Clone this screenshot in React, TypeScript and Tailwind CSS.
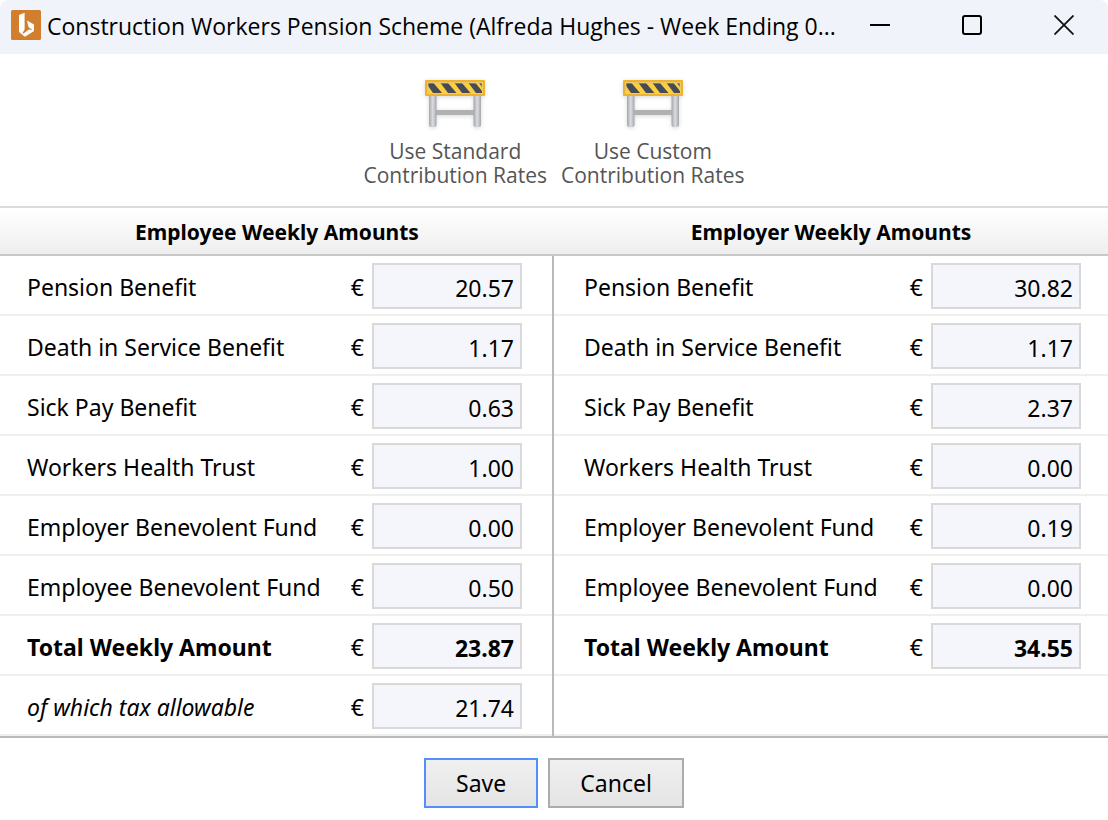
import React, { useState } from 'react';

type Row = {
  id: string;
  label: string;
  value: string;
  bold?: boolean;
  italic?: boolean;
};

const employeeRows: Row[] = [
  { id: 'ee-pension', label: 'Pension Benefit', value: '20.57' },
  { id: 'ee-death', label: 'Death in Service Benefit', value: '1.17' },
  { id: 'ee-sick', label: 'Sick Pay Benefit', value: '0.63' },
  { id: 'ee-health', label: 'Workers Health Trust', value: '1.00' },
  { id: 'ee-employer-fund', label: 'Employer Benevolent Fund', value: '0.00' },
  { id: 'ee-employee-fund', label: 'Employee Benevolent Fund', value: '0.50' },
  { id: 'ee-total', label: 'Total Weekly Amount', value: '23.87', bold: true },
  { id: 'ee-tax', label: 'of which tax allowable', value: '21.74', italic: true },
];

const employerRows: Row[] = [
  { id: 'er-pension', label: 'Pension Benefit', value: '30.82' },
  { id: 'er-death', label: 'Death in Service Benefit', value: '1.17' },
  { id: 'er-sick', label: 'Sick Pay Benefit', value: '2.37' },
  { id: 'er-health', label: 'Workers Health Trust', value: '0.00' },
  { id: 'er-employer-fund', label: 'Employer Benevolent Fund', value: '0.19' },
  { id: 'er-employee-fund', label: 'Employee Benevolent Fund', value: '0.00' },
  { id: 'er-total', label: 'Total Weekly Amount', value: '34.55', bold: true },
];

const AppLogo: React.FC = () => (
  <svg width="30" height="30" viewBox="0 0 30 30" className="shrink-0" aria-hidden="true">
    <rect width="30" height="30" rx="1.5" fill="#d17f2e" />
    <path d="M8 5L13.6 2.8V19.6L11.6 23L14 26.8L8 22Z" fill="#fff" />
    <path d="M16 10.5L23 14.5V21L17.6 17.2Z" fill="#fff" />
    <path d="M11.4 24.2L18 19.4L23 20.3V21L14 26.8Z" fill="#fff" />
  </svg>
);

const BarrierIcon: React.FC = () => (
  <svg width="64" height="56" viewBox="0 0 64 56" className="drop-shadow-sm" aria-hidden="true">
    <defs>
      <linearGradient id="leg" x1="0" x2="1" y1="0" y2="0">
        <stop offset="0" stopColor="#a4a6a8" />
        <stop offset="0.5" stopColor="#dcdde2" />
        <stop offset="1" stopColor="#a4a6a8" />
      </linearGradient>
      <clipPath id="board">
        <rect x="5" y="6" width="54" height="10" />
      </clipPath>
    </defs>
    <rect x="12" y="33" width="40" height="5" fill="#b0b1b2" />
    <rect x="6" y="17" width="7.5" height="33" rx="2" fill="url(#leg)" />
    <rect x="50.5" y="17" width="7.5" height="33" rx="2" fill="url(#leg)" />
    <rect x="2" y="3" width="60" height="16" rx="1" fill="#f0b12d" />
    <rect x="4" y="5" width="56" height="12" fill="#fbd040" />
    <g clipPath="url(#board)" fill="#474b55">
      <path d="M3 6H10.5L19 16H10Z" />
      <path d="M17.5 6H25L33.5 16H25Z" />
      <path d="M31.5 6H39L47.5 16H39Z" />
      <path d="M45.5 6H52.5L59 14V16H53Z" />
      <path d="M56 6H59V10Z" />
    </g>
    <path d="M5 14V6H59V14" fill="none" stroke="#c9c2b4" strokeWidth="0.8" />
  </svg>
);

const AmountRow: React.FC<{ row: Row }> = ({ row }) => {
  const [value, setValue] = useState(row.value);
  const weight = row.bold ? 'font-bold' : '';
  const slant = row.italic ? 'italic' : '';

  return (
    <div className="flex h-[45px] items-center">
      <label htmlFor={row.id} className={`flex-1 whitespace-nowrap pt-0.5 ${weight} ${slant}`}>
        {row.label}
      </label>
      <span className="mr-2 pt-0.5">€</span>
      <input
        id={row.id}
        type="text"
        value={value}
        onChange={(e) => setValue(e.target.value)}
        className={`h-[46px] w-[150px] border-2 border-[#d9d9d9] bg-[#f4f6fb] px-1.5 pt-1 text-right ${weight}`}
      />
    </div>
  );
};

const App: React.FC = () => {
  return (
    <div className="min-h-screen bg-white font-['Noto_Sans',sans-serif] text-[23px] leading-8 text-black">
      <header className="flex h-[54px] items-center justify-between rounded-t-lg bg-[#f0f3f9] pr-[34px] pb-1 pl-[11px]">
        <div className="flex items-center gap-1.5">
          <AppLogo />
          <h1 className="pt-0.5 font-['Open_Sans',sans-serif] whitespace-nowrap">
            Construction Workers Pension Scheme (Alfreda Hughes - Week Ending 0...
          </h1>
        </div>
        <div className="flex gap-[72px]">
          <button type="button" aria-label="Minimize">
            <svg width="20" height="20" viewBox="0 0 20 20">
              <path d="M0 10H20" stroke="#000" strokeWidth="2" />
            </svg>
          </button>
          <button type="button" aria-label="Maximize">
            <svg width="20" height="20" viewBox="0 0 20 20">
              <rect x="1" y="1" width="18" height="18" rx="2" fill="none" stroke="#000" strokeWidth="2" />
            </svg>
          </button>
          <button type="button" aria-label="Close">
            <svg width="20" height="20" viewBox="0 0 20 20">
              <path d="M0.5 0.5L19.5 19.5M19.5 0.5L0.5 19.5" stroke="#111" strokeWidth="1.8" />
            </svg>
          </button>
        </div>
      </header>

      <div className="flex h-[152px] items-start justify-center gap-3.5 pt-[23px] font-['Open_Sans',sans-serif] text-[21px] leading-6 text-[#555]">
        <button type="button" className="flex flex-col items-center">
          <BarrierIcon />
          <span className="mt-1.5">Use Standard</span>
          <span>Contribution Rates</span>
        </button>
        <button type="button" className="flex flex-col items-center">
          <BarrierIcon />
          <span className="mt-1.5">Use Custom</span>
          <span>Contribution Rates</span>
        </button>
      </div>

      <form onSubmit={(e) => e.preventDefault()}>
        <div className="grid h-[50px] grid-cols-2 items-center border-y-2 border-t-[#dcdcdc] border-b-[#c8c8c8] bg-linear-to-b from-white to-[#eeeeee] pt-0.5 text-center text-[21px] font-bold">
          <h2>Employee Weekly Amounts</h2>
          <h2>Employer Weekly Amounts</h2>
        </div>

        <div className="grid grid-cols-2 border-b-2 border-[#b9b9b9]">
          <section className="border-r-2 border-[#b9b9b9]">
            {employeeRows.map((row) => (
              <div key={row.id} className="h-15 border-b-2 border-[#efefef] pt-[7px] pr-[30px] pl-[27px]">
                <AmountRow row={row} />
              </div>
            ))}
          </section>
          <section>
            {employerRows.map((row) => (
              <div key={row.id} className="h-15 border-b-2 border-[#efefef] pt-[7px] pr-[27px] pl-[30px]">
                <AmountRow row={row} />
              </div>
            ))}
            <div className="h-15 border-b-2 border-[#efefef]"></div>
          </section>
        </div>

        <div className="flex justify-center gap-2.5 pt-5">
          <button
            type="submit"
            className="h-[50px] border-2 border-[#5290f5] bg-linear-to-b from-[#f0f0f0] to-[#e4e4e4] px-[30px]"
          >
            Save
          </button>
          <button
            type="button"
            className="h-[50px] border-2 border-[#acacac] bg-linear-to-b from-[#f0f0f0] to-[#e4e4e4] px-[30px]"
          >
            Cancel
          </button>
        </div>
      </form>
    </div>
  );
};

export default App;
